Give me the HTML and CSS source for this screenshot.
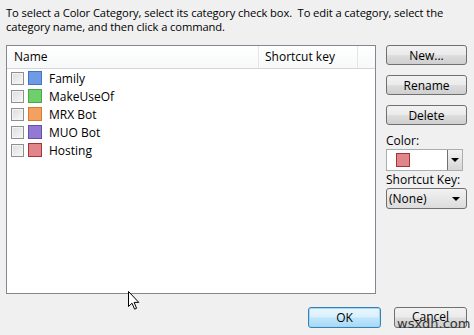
FILE: index.html
```html
<!DOCTYPE html>
<html lang="en">
<head>
  <meta charset="UTF-8">
  <title>Color Categories</title>
  <link rel="stylesheet" href="styles.css">
</head>
<body>

<div class="dialog">
  <p class="intro">To select a Color Category, select its category check box.&nbsp; To edit a category, select the category name, and then click a command.</p>

  <div class="main">
    <div class="list">
      <div class="list-head">
        <div class="col-name">Name</div>
        <div class="col-key">Shortcut key</div>
        <div class="col-rest"></div>
      </div>
      <div class="row"><span class="check"></span><span class="swatch blue"></span>Family</div>
      <div class="row"><span class="check"></span><span class="swatch green"></span>MakeUseOf</div>
      <div class="row"><span class="check"></span><span class="swatch orange"></span>MRX Bot</div>
      <div class="row"><span class="check"></span><span class="swatch purple"></span>MUO Bot</div>
      <div class="row"><span class="check"></span><span class="swatch red"></span>Hosting</div>
    </div>

    <div class="side">
      <button class="btn">New...</button>
      <button class="btn">Rename</button>
      <button class="btn">Delete</button>
      <div class="label">Color:</div>
      <div class="color-pick">
        <span class="swatch red"></span>
        <span class="drop-btn"><span class="tri"></span></span>
      </div>
      <div class="label">Shortcut Key:</div>
      <div class="key-select">(None)<span class="tri"></span></div>
    </div>
  </div>

  <div class="footer">
    <button class="btn ok">OK</button>
    <button class="btn cancel">Cancel</button>
  </div>

  <svg class="cursor" width="12" height="19" viewBox="0 0 12 19">
    <path d="M0.5 0.5 L0.5 15.5 L4 12.2 L6.6 18.2 L8.6 17.3 L6.1 11.4 L10.8 11.4 Z" fill="#fff" stroke="#000" stroke-width="1"/>
  </svg>
  <div class="watermark">wsxdn.com</div>
</div>

</body>
</html>
```

FILE: styles.css
```css
body { margin: 0; background: #f0f0f0; font-family: "Open Sans", "Noto Sans", sans-serif; font-size: 12px; color: #000; }
.dialog { position: relative; width: 474px; height: 335px; overflow: hidden; }
.intro { margin: 0; padding: 6px 0 0 6px; line-height: 14px; font-size: 11.2px; letter-spacing: -0.1px; }

.main { display: flex; margin-top: 11px; padding-left: 6px; }
.list { width: 368px; height: 247px; background: #fff; border: 1px solid #828790; }
.list-head { display: flex; height: 22px; border-bottom: 1px solid #d5d5d5; background: linear-gradient(#fff, #f7f8f9); }
.list-head div { line-height: 22px; border-right: 1px solid #e3e5e8; }
.col-name { width: 244px; padding-left: 7px; }
.col-key { width: 92px; padding-left: 6px; }
.col-rest { flex: 1; border-right: none !important; }

.row { display: flex; align-items: center; height: 18px; padding-left: 4px; }
.row:first-of-type { margin-top: 1px; }
.check { width: 11px; height: 11px; border: 1px solid #8f8f8f; background: linear-gradient(135deg, #dcdcdc, #f8f8f8); margin-right: 4px; box-shadow: inset 0 0 0 1px #f4f4f4; }
.swatch { width: 12px; height: 12px; display: inline-block; margin-right: 7px; }
.blue { background: #6f9be4; border: 1px solid #4472c4; }
.green { background: #6fcf6a; border: 1px solid #4aa84a; }
.orange { background: #f3a160; border: 1px solid #d77a30; }
.purple { background: #9179d4; border: 1px solid #6650a8; }
.red { background: #e0868a; border: 1px solid #a8323a; }

.side { display: flex; flex-direction: column; margin-left: 10px; width: 81px; }
.btn { font-family: inherit; font-size: 12px; height: 20px; padding: 0; border: 1px solid #707070; border-radius: 3px; background: linear-gradient(#f2f2f2 0%, #ebebeb 48%, #dddddd 52%, #cfcfcf 100%); color: #000; }
.side .btn { width: 81px; margin-bottom: 10px; }
.label { line-height: 16px; margin-top: -2px; }
.color-pick { display: flex; align-items: center; width: 75px; height: 20px; border: 1px solid #abadb3; background: #fff; margin: 0 0 3px 0; }
.color-pick .swatch { margin: 0 0 0 9px; }
.drop-btn { margin-left: auto; width: 14px; height: 20px; border-left: 1px solid #707070; background: linear-gradient(#f2f2f2, #d6d6d6); display: flex; align-items: center; justify-content: center; }
.tri { width: 0; height: 0; border-left: 4px solid transparent; border-right: 4px solid transparent; border-top: 4px solid #000; }
.key-select { display: flex; align-items: center; justify-content: space-between; width: 71px; height: 19px; padding: 0 6px 0 2px; border: 1px solid #707070; border-radius: 3px; background: linear-gradient(#f2f2f2, #dcdcdc); }

.footer { display: flex; justify-content: flex-end; gap: 13px; padding: 13px 7px 0 0; }
.footer .btn { width: 73px; height: 21px; }
.btn.ok { border-color: #3c7fb1; background: linear-gradient(#eaf6fd 0%, #d9f0fc 48%, #bee6fd 52%, #a7d9f5 100%); box-shadow: inset 0 0 0 1px #9fd8f7; }
.btn.cancel { padding-bottom: 4px; }

.cursor { position: absolute; left: 128px; top: 291px; }
.watermark { position: absolute; left: 397px; top: 316px; font-family: "DejaVu Sans", sans-serif; font-size: 13px; color: #333; }
```
